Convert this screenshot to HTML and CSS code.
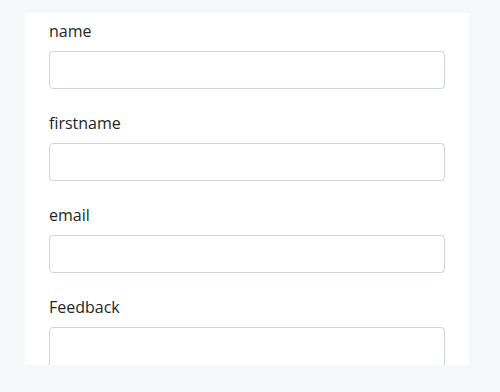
FILE: index.html
```html
<!DOCTYPE html>
<html lang="en">

<head>
    <meta charset="UTF-8">
    <meta name="viewport" content="width=device-width, initial-scale=1.0">
    <title>Feedback</title>
    <link rel="stylesheet" href="styles.css">
</head>

<body>
    <div class="card">
        <form class="feedback-form">
            <div class="field">
                <label for="name">name</label>
                <input type="text" id="name">
            </div>
            <div class="field">
                <label for="firstname">firstname</label>
                <input type="text" id="firstname">
            </div>
            <div class="field">
                <label for="email">email</label>
                <input type="email" id="email">
            </div>
            <div class="field">
                <label for="feedback">Feedback</label>
                <textarea id="feedback" rows="5"></textarea>
            </div>
        </form>
    </div>
</body>

</html>
```

FILE: styles.css
```css
/* General styles */
* {
    box-sizing: border-box;
}

body {
    font-family: "Open Sans", Arial, sans-serif;
    margin: 0;
    padding: 13px 0 0 25px;
    background-color: #f7f8fa;
    color: #212529;
    height: 392px;
    overflow: hidden;
}

.card {
    width: 444px;
    height: 352px;
    background-color: #ffffff;
    padding: 6px 24px 0;
    overflow: hidden;
}

.field {
    display: flex;
    flex-direction: column;
    margin-bottom: 22px;
}

.field label {
    font-size: 16px;
    line-height: 24px;
    margin-bottom: 8px;
}

.field input,
.field textarea {
    width: 100%;
    height: 38px;
    border: 1px solid #ced4da;
    border-radius: 4px;
    padding: 6px 12px;
    font-family: inherit;
    font-size: 16px;
    outline: none;
    resize: none;
}

.field textarea {
    height: 120px;
}
```
